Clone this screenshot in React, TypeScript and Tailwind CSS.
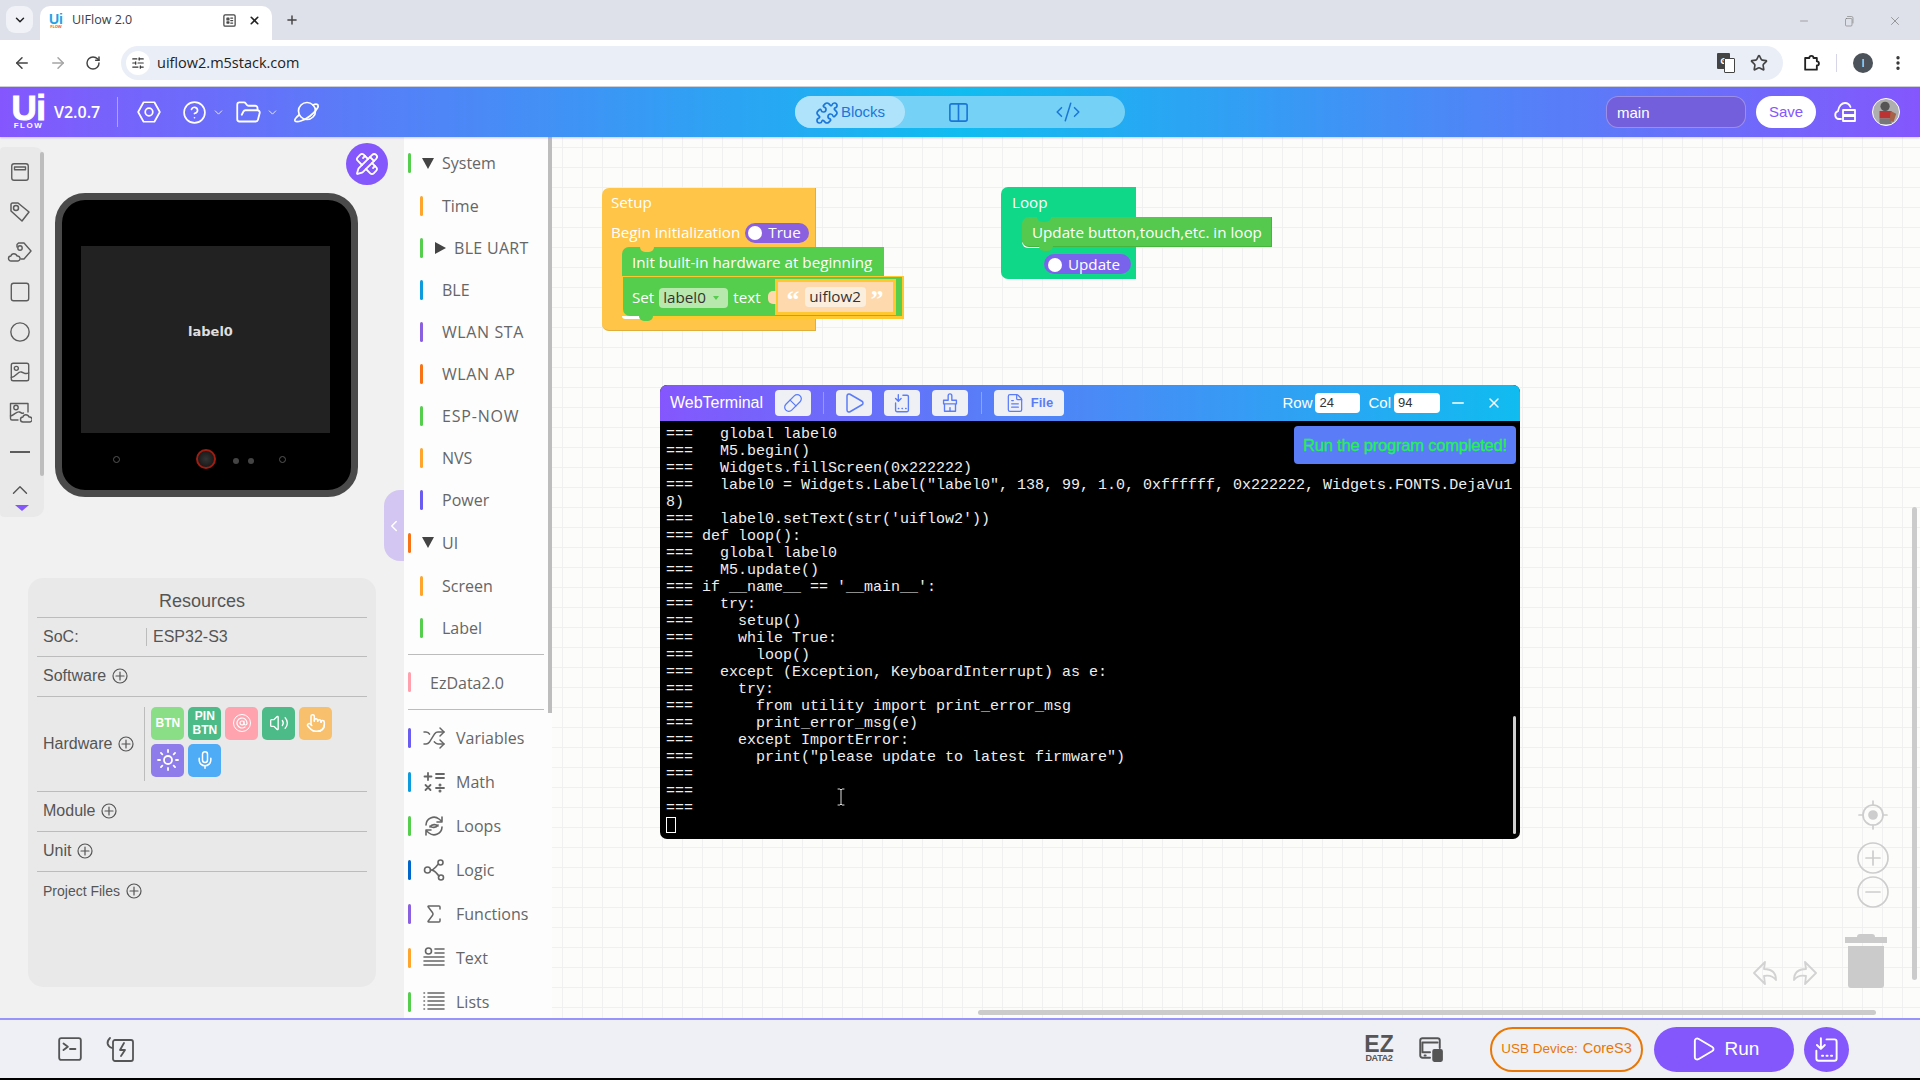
import React from "react";
import { ArrowLeft, ArrowRight, RotateCw, Star, X, Plus, ChevronDown, ChevronUp, ChevronLeft, CircleHelp, FolderOpen, PencilRuler, Shuffle, Sigma, Mic, Volume2, Sun, Pointer, AtSign, Play, FileText, Minus, Puzzle, CodeXml, Columns2, SlidersHorizontal, Pill, EllipsisVertical } from "lucide-react";

const S = ({ className = "", children, box = "0 0 24 24", w = 1.8 }: { className?: string; children: React.ReactNode; box?: string; w?: number }) => (
  <svg viewBox={box} className={className} fill="none" stroke="currentColor" strokeWidth={w} strokeLinecap="round" strokeLinejoin="round">{children}</svg>
);

const PlusC = () => (
  <S className="w-[16px] h-[16px] text-[#555] ml-[6px]" box="0 0 16 16" w={1.2}><circle cx="8" cy="8" r="7" /><path d="M8 4v8M4 8h8" /></S>
);

type Cat = { t: string; bar: string; barMl: string; tri?: "d" | "r"; triMl?: string; txMl: string; h: string; tr?: string };
const cats: Cat[] = [
  { t: "System", bar: "bg-[#55cd4d]", barMl: "ml-0", tri: "d", triMl: "ml-[11px]", txMl: "ml-[8px]", h: "h-[42px]" },
  { t: "Time", bar: "bg-[#ffa42d]", barMl: "ml-[12px]", txMl: "ml-[19px]", h: "h-[43px]" },
  { t: "BLE UART", bar: "bg-[#55cd4d]", barMl: "ml-[12px]", tri: "r", triMl: "ml-[12px]", txMl: "ml-[8px]", h: "h-[42px]", tr: "tracking-[0.3px]" },
  { t: "BLE", bar: "bg-[#0d9bdd]", barMl: "ml-[12px]", txMl: "ml-[19px]", h: "h-[42px]" },
  { t: "WLAN STA", bar: "bg-[#8a60e0]", barMl: "ml-[12px]", txMl: "ml-[19px]", h: "h-[42px]", tr: "tracking-[0.6px]" },
  { t: "WLAN AP", bar: "bg-[#f87316]", barMl: "ml-[12px]", txMl: "ml-[19px]", h: "h-[42px]", tr: "tracking-[0.6px]" },
  { t: "ESP-NOW", bar: "bg-[#55cd4d]", barMl: "ml-[12px]", txMl: "ml-[19px]", h: "h-[42px]", tr: "tracking-[0.8px]" },
  { t: "NVS", bar: "bg-[#ffa42d]", barMl: "ml-[12px]", txMl: "ml-[19px]", h: "h-[42px]" },
  { t: "Power", bar: "bg-[#6a5cf0]", barMl: "ml-[12px]", txMl: "ml-[19px]", h: "h-[42px]" },
  { t: "UI", bar: "bg-[#f87316]", barMl: "ml-0", tri: "d", triMl: "ml-[11px]", txMl: "ml-[8px]", h: "h-[43px]" },
  { t: "Screen", bar: "bg-[#ffa42d]", barMl: "ml-[12px]", txMl: "ml-[19px]", h: "h-[43px]" },
  { t: "Label", bar: "bg-[#55cd4d]", barMl: "ml-[12px]", txMl: "ml-[19px]", h: "h-[42px]" },
];

const I = "w-[24px] h-[24px] text-[#666]";
const tools: { t: string; bar: string; icon: React.ReactNode }[] = [
  { t: "Variables", bar: "bg-[#6a5cf0]", icon: <Shuffle className={I} strokeWidth={1.5} /> },
  {
    t: "Math", bar: "bg-[#0d9bdd]", icon: (
      <S className={I} w={1.8}><path d="M6 3v7M2.500 6.500h7M14 4h8M14 8h8M3.500 15l5 5M8.500 15l-5 5M14 18h8" /><circle cx="18" cy="15" r=".6" /><circle cx="18" cy="21" r=".6" /></S>
    ),
  },
  {
    t: "Loops", bar: "bg-[#55cd4d]", icon: (
      <S className={I} w={1.6}><path d="M4 11a8 8 0 0 1 13-6l3 2.500M20 3v5h-5" /><path d="M20 13a8 8 0 0 1-13 6l-3-2.500M4 21v-5h5" /><path d="M8 13c2-3 6-3 8-1M16 11c-2 3-6 3-8 1" /></S>
    ),
  },
  {
    t: "Logic", bar: "bg-[#0066cc]", icon: (
      <S className={I} w={1.6}><circle cx="5.500" cy="12" r="3" /><circle cx="18.500" cy="4.500" r="2.500" /><circle cx="19" cy="19.500" r="2.500" /><path d="M8.500 12c4 0 4-2 8-6M8.500 12c4 0 5 2 8.500 6" /></S>
    ),
  },
  { t: "Functions", bar: "bg-[#8a60e0]", icon: <Sigma className={I} strokeWidth={1.5} /> },
  {
    t: "Text", bar: "bg-[#ffa42d]", icon: (
      <S className={I} w={1.6}><circle cx="6.500" cy="5" r="3" /><path d="M13 3h9M13 7h9M2 11h20M2 15h20M2 19h20" /></S>
    ),
  },
  {
    t: "Lists", bar: "bg-[#55cd4d]", icon: (
      <S className={I} w={1.6}><path d="M6 3h16M6 7h16M6 11h16M6 15h16M6 19h16M2 3h.5M2 7h.5M2 11h.5M2 15h.5M2 19h.5" /></S>
    ),
  },
];

const term = [
  "===   global label0",
  "===   M5.begin()",
  "===   Widgets.fillScreen(0x222222)",
  '===   label0 = Widgets.Label("label0", 138, 99, 1.0, 0xffffff, 0x222222, Widgets.FONTS.DejaVu1',
  "8)",
  "===   label0.setText(str('uiflow2'))",
  "=== def loop():",
  "===   global label0",
  "===   M5.update()",
  "=== if __name__ == '__main__':",
  "===   try:",
  "===     setup()",
  "===     while True:",
  "===       loop()",
  "===   except (Exception, KeyboardInterrupt) as e:",
  "===     try:",
  "===       from utility import print_error_msg",
  "===       print_error_msg(e)",
  "===     except ImportError:",
  '===       print("please update to latest firmware")',
  "===",
  "===",
  "===",
];

const Tile = ({ bg, children }: { bg: string; children: React.ReactNode }) => (
  <div className={`w-[33px] h-[33px] rounded-[5px] flex items-center justify-center text-white font-bold text-[12px] leading-[14px] text-center ${bg}`}>{children}</div>
);

const Row = ({ children, h, cls = "" }: { children: React.ReactNode; h: string; cls?: string }) => (
  <div className={`flex items-center border-b border-[#bcbcbc] pl-[6px] ${h} ${cls}`}>{children}</div>
);

const TermBtn = ({ children, w = "w-[36px]" }: { children: React.ReactNode; w?: string }) => (
  <div className={`h-[26px] ${w} rounded-[4px] bg-[#eef0f6] flex items-center justify-center text-[#5b7cf7]`}>{children}</div>
);

const Knob = () => <span className="w-[14px] h-[14px] rounded-full bg-white shrink-0" />;

const Notch = ({ cls }: { cls: string }) => <span className={`absolute w-[14px] h-[5px] rounded-b-[5px] ${cls}`} />;

const StripIcon = ({ children }: { children: React.ReactNode }) => (
  <div className="h-[40px] flex items-center justify-center w-[40px] text-[#5c5c5c]">{children}</div>
);

export default function App() {
  return (
    <div className="w-[1920px] h-[1080px] overflow-hidden flex flex-col bg-black font-['Open_Sans','Noto_Sans',sans-serif]">
      {/* Browser tab strip */}
      <div className="h-[40px] shrink-0 bg-[#dee1e9] flex items-end relative">
        <div className="absolute left-[6px] top-[6px] w-[27px] h-[27px] rounded-[9px] bg-[#f0f2f8] flex items-center justify-center">
          <ChevronDown className="w-[14px] h-[14px] text-[#222]" strokeWidth={2.5} />
        </div>
        <div className="ml-[40px] w-[232px] h-[34px] bg-white rounded-t-[10px] flex items-center pl-[8px] pb-[5px]">
          <div className="w-[16px] h-[16px] flex flex-col items-center leading-none">
            <span className="text-[#1ca3e6] font-black text-[14px] leading-[12px] font-['Liberation_Sans']">Ui</span>
            <span className="text-[#e53] text-[4px] leading-[4px] font-bold">FLOW</span>
          </div>
          <span className="ml-[8px] text-[12.5px] text-[#3c4043]">UIFlow 2.0</span>
          <S className="ml-auto w-[15px] h-[15px] text-[#444]" w={2}><rect x="3" y="3" width="18" height="18" rx="2" /><path d="M8 8h3v3H8zM8 14h3v2H8zM14 8h3M14 12h3M14 16h3" /></S>
          <X className="ml-[11px] mr-[11px] w-[13px] h-[13px] text-[#222]" strokeWidth={3} />
        </div>
        <Plus className="absolute left-[285px] top-[13px] w-[14px] h-[14px] text-[#444]" strokeWidth={2.5} />
        <div className="absolute top-[14px] right-[18px] flex items-center gap-[33px] text-[#777]">
          <Minus className="w-[12px] h-[12px]" strokeWidth={1.2} />
          <S className="w-[12px] h-[12px]" w={1.2}><rect x="5" y="7" width="13" height="15" rx="2" /><path d="M9 3h8a3 3 0 0 1 3 3v10" /></S>
          <X className="w-[14px] h-[14px]" strokeWidth={1.2} />
        </div>
      </div>
      {/* Browser toolbar */}
      <div className="h-[47px] shrink-0 bg-white border-b border-[#cfd1d6] flex items-center relative">
        <ArrowLeft className="ml-[13px] w-[18px] h-[18px] text-[#444]" strokeWidth={2} />
        <ArrowRight className="ml-[18px] w-[18px] h-[18px] text-[#a5a5a5]" strokeWidth={2} />
        <RotateCw className="ml-[18px] w-[16px] h-[16px] text-[#444]" strokeWidth={2.2} />
        <div className="ml-[20px] w-[1662px] h-[34px] rounded-[17px] bg-[#eaeef7] flex items-center pl-[5px] mb-[1px]">
          <div className="w-[24px] h-[24px] rounded-full bg-white flex items-center justify-center">
            <SlidersHorizontal className="w-[14px] h-[14px] text-[#333]" strokeWidth={2} />
          </div>
          <span className="ml-[7px] text-[14.500px] text-[#222]">uiflow2.m5stack.com</span>
          <div className="ml-auto mr-[15px] flex items-center gap-[15px] text-[#444]">
            <div className="relative w-[18px] h-[20px]">
              <div className="absolute left-0 top-0 w-[13px] h-[16px] bg-[#444] rounded-[1px] flex items-center justify-center text-white text-[9px] font-bold">G</div>
              <div className="absolute left-[7px] top-[5px] w-[11px] h-[15px] bg-white border border-[#444] rounded-[1px]" />
            </div>
            <Star className="w-[18px] h-[18px]" strokeWidth={2.2} />
          </div>
        </div>
        <S className="ml-[18px] w-[20px] h-[20px] text-[#222]" w={2.2}><path d="M5 6h5a2.500 2.500 0 0 1 5 0h4v4a2.500 2.500 0 0 1 0 5v5H5z" /></S>
        <span className="ml-[15px] w-[1px] h-[18px] bg-[#d5d7e8]" />
        <span className="ml-[16px] w-[20px] h-[20px] rounded-full bg-[#4b5259] flex items-center justify-center text-white text-[11px]">I</span>
        <EllipsisVertical className="ml-[16px] w-[18px] h-[18px] text-[#333]" strokeWidth={2.5} />
      </div>
      {/* App header */}
      <div className="h-[50px] shrink-0 relative z-10 grid grid-cols-[1fr_auto_1fr] items-center bg-[linear-gradient(90deg,#8457fd_0%,#10bcf0_50%,#8457fd_100%)] shadow-[0_1px_2px_rgba(132,87,253,0.35)]">
        <div className="flex items-center text-white">
          <div className="ml-[12px] w-[33px] flex flex-col items-center font-['Liberation_Sans'] font-bold">
            <span className="text-[35px] leading-[26px] tracking-[-0.5px] [-webkit-text-stroke:1px_white]">Ui</span>
            <span className="text-[8px] leading-[7px] tracking-[1.5px] mt-[1px]">FLOW</span>
          </div>
          <span className="ml-[9px] text-[16px] font-semibold w-[48px]">V2.0.7</span>
          <span className="ml-[15px] w-[1px] h-[30px] bg-white/40" />
          <S className="ml-[18px] w-[26px] h-[26px]" w={1.6}><path d="M7 3h10l5 9-5 9H7l-5-9z" /><circle cx="12" cy="12" r="3.500" /></S>
          <CircleHelp className="ml-[20px] w-[25px] h-[25px]" strokeWidth={1.6} />
          <ChevronDown className="ml-[5px] w-[13px] h-[13px]" strokeWidth={1.5} />
          <FolderOpen className="ml-[10px] w-[27px] h-[27px]" strokeWidth={1.6} />
          <ChevronDown className="ml-[4px] w-[13px] h-[13px]" strokeWidth={1.5} />
          <S className="ml-[13px] w-[30px] h-[26px]" box="0 0 30 26" w={1.7}><circle cx="15" cy="12" r="8.500" /><path d="M7 16c-3 2.500-5 4.500-4 6 2 2 10-1 15-5s9-9 8-11c-1-1-3-1-5 0" /></S>
        </div>
        <div className="w-[330px] h-[32px] rounded-[16px] bg-[#75d1f5] flex items-center font-['Liberation_Sans'] text-[#1b76d9]">
          <div className="w-[110px] h-[32px] rounded-[16px] bg-[#aee3fb] flex items-center justify-center gap-[2px] text-[15px] pt-[1px]">
            <Puzzle className="w-[24px] h-[24px]" strokeWidth={1.7} />
            <span>Blocks</span>
          </div>
          <Columns2 className="ml-[42px] w-[23px] h-[23px]" strokeWidth={1.7} />
          <CodeXml className="ml-[85px] w-[26px] h-[26px]" strokeWidth={1.4} />
        </div>
        <div className="flex items-center justify-end pr-[20px]">
          <div className="w-[140px] h-[32px] rounded-[12px] border border-white/30 bg-[#735fdc] text-white text-[15px] flex items-center pl-[10px] pt-[2px] font-['Liberation_Sans']">main</div>
          <div className="ml-[10px] w-[60px] h-[32px] rounded-[16px] bg-white text-[#8457fd] text-[15px] flex items-center justify-center pt-[1px] font-['Liberation_Sans']">Save</div>
          <S className="ml-[17px] w-[24px] h-[24px] text-white" w={1.8}><path d="M8 19H6a4 4 0 0 1-1-7.800C5.500 6 9 3 12 3c2.500 0 4.500 1.500 5.500 4" /><rect x="10" y="10" width="12" height="5" /><rect x="10" y="16" width="12" height="5" /></S>
          <div className="ml-[15px] w-[28px] h-[28px] rounded-full bg-[#aeaeae] border border-white flex items-end justify-center overflow-hidden">
            <svg viewBox="0 0 28 28" className="w-[28px] h-[28px]"><circle cx="13" cy="9" r="5" fill="#555" /><rect x="7" y="14" width="13" height="8" fill="#b33" /><rect x="7" y="22" width="13" height="6" fill="#777" /><path d="M19 14l6 3-3 9-4-2z" fill="#a5634a" /></svg>
          </div>
        </div>
      </div>
      {/* Main area */}
      <div className="flex-1 flex min-h-0 relative">
        {/* Left panel */}
        <div className="w-[404px] shrink-0 bg-[#f1f1f1] relative flex flex-col">
          <div className="h-[441px] flex items-start">
            <div className="mt-[10px] w-[44px] h-[370px] bg-[#e9e9e9] rounded-r-[10px] rounded-l-[4px] relative pt-[5px]">
              <span className="absolute right-0 top-[5px] w-[4px] h-[324px] bg-[#bdbdbd] rounded-[2px]" />
              <StripIcon><S className="w-[22px] h-[22px]" w={1.5}><rect x="3" y="3" width="18" height="18" rx="2.500" /><rect x="6" y="6.500" width="12" height="3" /></S></StripIcon>
              <StripIcon><S className="w-[24px] h-[24px]" w={1.5}><path d="M3 8V4.500A1.500 1.500 0 0 1 4.500 3H10l11 9-7 9-11-10z" /><circle cx="8" cy="8" r="2.500" /></S></StripIcon>
              <StripIcon><S className="w-[26px] h-[24px]" w={1.4}><path d="M9 7V4.500L10.500 3H16l7 8-7 8h-3" /><circle cx="12" cy="8" r="2.200" /><path d="M3 21a2.500 2.500 0 0 1 0-5c.5-3 5-3 6 0a2.500 2.500 0 0 1 1 5z" /></S></StripIcon>
              <StripIcon><S className="w-[22px] h-[22px]" w={1.5}><rect x="2.500" y="2.500" width="19" height="19" rx="2.500" /></S></StripIcon>
              <StripIcon><S className="w-[22px] h-[22px]" w={1.5}><circle cx="12" cy="12" r="10" /></S></StripIcon>
              <StripIcon><S className="w-[22px] h-[22px]" w={1.5}><rect x="2.500" y="2.500" width="19" height="19" rx="2" /><circle cx="8" cy="8" r="2.200" /><path d="M2.500 18c6-1 7-7 11-6s4 3 8 1" /></S></StripIcon>
              <StripIcon><S className="w-[24px] h-[24px]" w={1.4}><path d="M10 20H4a1.500 1.500 0 0 1-1.500-1.500V3.500H20V12" /><circle cx="8" cy="7.500" r="2.200" /><path d="M2.500 16c4-1 6-5 9-4s2 2 4 1" /><path d="M15 22a2.500 2.500 0 0 1 0-5c.5-3 5-3 6 0a2.500 2.500 0 0 1 1 5z" /></S></StripIcon>
              <StripIcon><span className="w-[20px] h-[1.500px] bg-[#5c5c5c]" /></StripIcon>
              <div className="mt-[7px] w-[40px] h-[22px] flex items-center justify-center text-[#555]"><ChevronUp className="w-[26px] h-[26px]" strokeWidth={1.3} /></div>
              <div className="mt-[4px] ml-[15px] w-0 h-0 border-l-[7.500px] border-r-[7.500px] border-t-[6px] border-l-transparent border-r-transparent border-t-[#8457fd]" />
            </div>
            {/* Device */}
            <div className="ml-[11px] mt-[56px] w-[303px] h-[304px] rounded-[30px] border-[7px] border-[#4a4a4a] bg-black pt-[46px] pl-[19px] shrink-0">
              <div className="w-[249px] h-[187px] bg-[#222222] flex items-center justify-center pl-[10px] pb-[15px] text-[13px] font-semibold text-[#dedede] font-['DejaVu_Sans']">label0</div>
              <div className="mt-[16px] h-[20px] flex items-center ml-[32px]">
                <span className="w-[7px] h-[7px] rounded-full border border-[#555]" />
                <span className="ml-[76px] w-[20px] h-[20px] rounded-full border-2 border-[#a01d12] bg-[radial-gradient(circle,#333,#111)]" />
                <span className="ml-[17px] mt-[3px] w-[6px] h-[6px] rounded-full bg-[#444]" />
                <span className="ml-[9px] mt-[3px] w-[6px] h-[6px] rounded-full bg-[#444]" />
                <span className="ml-[25px] w-[7px] h-[7px] rounded-full border border-[#555]" />
              </div>
            </div>
          </div>
          {/* Resources */}
          <div className="ml-[28px] w-[348px] h-[409px] rounded-[15px] bg-[#e9e9e9] px-[9px] text-[#555] font-['Liberation_Sans'] text-[16px]">
            <div className="h-[40px] border-b border-[#bcbcbc] flex items-center justify-center text-[18px] pt-[8px]">Resources</div>
            <Row h="h-[39px]">
              <span className="w-[103px]">SoC:</span>
              <span className="w-[1px] h-[18px] bg-[#bcbcbc]" />
              <span className="ml-[6px]">ESP32-S3</span>
            </Row>
            <Row h="h-[40px]" cls="pb-[2px]"><span>Software</span><PlusC /></Row>
            <Row h="h-[95px]">
              <span>Hardware</span><PlusC />
              <span className="ml-[10px] w-[1px] h-[74px] bg-[#bcbcbc]" />
              <div className="ml-[6px] w-[185px] flex flex-wrap gap-x-[4px] gap-y-[4px] mb-[5px]">
                <Tile bg="bg-[#8ade85]">BTN</Tile>
                <Tile bg="bg-[#4cbb87]">PIN<br />BTN</Tile>
                <Tile bg="bg-[#ffa3ae]"><span className="w-[18px] h-[18px] rounded-full border-[1.500px] border-white flex items-center justify-center"><AtSign className="w-[12px] h-[12px]" strokeWidth={2.4} /></span></Tile>
                <Tile bg="bg-[#4cbb87]"><Volume2 className="w-[20px] h-[20px]" strokeWidth={1.6} /></Tile>
                <Tile bg="bg-[#f8c06c]"><Pointer className="w-[20px] h-[20px]" strokeWidth={1.8} /></Tile>
                <Tile bg="bg-[#8e7cea]"><Sun className="w-[24px] h-[24px]" strokeWidth={1.8} /></Tile>
                <Tile bg="bg-[#4eabf6]"><Mic className="w-[20px] h-[20px]" strokeWidth={1.8} /></Tile>
              </div>
            </Row>
            <Row h="h-[40px]" cls="pb-[2px]"><span>Module</span><PlusC /></Row>
            <Row h="h-[40px]" cls="pb-[2px]"><span>Unit</span><PlusC /></Row>
            <div className="h-[40px] flex items-center pl-[6px] pb-[2px] text-[14px]"><span>Project Files</span><PlusC /></div>
          </div>
          {/* overlay: edit button + collapse tab */}
          <div className="absolute left-[346px] top-[6px] w-[42px] h-[42px] rounded-full bg-[#8457fd] flex items-center justify-center text-white">
            <PencilRuler className="w-[24px] h-[24px]" strokeWidth={1.8} />
          </div>
          <div className="absolute right-0 top-[353px] w-[20px] h-[71px] rounded-l-[16px] bg-[#d4c6f2] flex items-center justify-center text-white">
            <ChevronLeft className="w-[18px] h-[18px]" strokeWidth={2} />
          </div>
        </div>
        {/* Categories */}
        <div className="w-[148px] shrink-0 bg-[#fdfdfd] relative pl-[4px] pt-[5px] overflow-hidden text-[#666] text-[16px]">
          <span className="absolute right-0 top-0 w-[4px] h-[576px] bg-[#bdbdbd]" />
          {cats.map((c) => (
            <div key={c.t} className={`flex items-center ${c.h}`}>
              <span className={`w-[3px] h-[20px] rounded-[2px] shrink-0 ${c.bar} ${c.barMl}`} />
              {c.tri === "d" && <span className={`w-0 h-0 border-l-[6px] border-r-[6px] border-t-[11px] border-l-transparent border-r-transparent border-t-[#444] ${c.triMl}`} />}
              {c.tri === "r" && <span className={`w-0 h-0 border-t-[6px] border-b-[6px] border-l-[11px] border-t-transparent border-b-transparent border-l-[#444] ${c.triMl}`} />}
              <span className={`${c.txMl} whitespace-nowrap ${c.tr ?? ""}`}>{c.t}</span>
            </div>
          ))}
          <div className="mt-[5px] mr-[8px] h-[1px] bg-[#bcbcbc]" />
          <div className="flex items-center h-[54px]">
            <span className="w-[3px] h-[20px] rounded-[2px] bg-[#ffa0ac]" />
            <span className="ml-[19px] pt-[2px]">EzData2.0</span>
          </div>
          <div className="mr-[8px] h-[1px] bg-[#bcbcbc]" />
          <div className="pt-[6px]">
            {tools.map((c) => (
              <div key={c.t} className="flex items-center h-[44px]">
                <span className={`w-[3px] h-[20px] rounded-[2px] shrink-0 ${c.bar}`} />
                <span className="ml-[11px] w-[24px] h-[24px] shrink-0">{c.icon}</span>
                <span className="ml-[10px]">{c.t}</span>
              </div>
            ))}
          </div>
        </div>
        {/* Canvas */}
        <div className="flex-1 relative overflow-hidden bg-[#fcfcfb] bg-[linear-gradient(#f0f0f0_1px,transparent_1px),linear-gradient(90deg,#f0f0f0_1px,transparent_1px)] bg-[size:20px_20px] bg-[position:10px_10px] font-['Open_Sans','Noto_Sans',sans-serif] text-[15.200px] text-white">
          {/* Setup block */}
          <div className="absolute left-[50px] top-[51px] w-[214px] h-[143px] bg-[#fec548] border-r border-b border-[#e0ae3d] rounded-l-[7px]">
            <div className="h-[29px] flex items-center pl-[9px]">Setup</div>
            <div className="h-[30px] flex items-center pl-[9px] pt-[1px] whitespace-nowrap">Begin initialization
              <div className="ml-[5px] w-[64px] h-[20px] rounded-[10px] bg-[#8a60e0] flex items-center pl-[3px]"><Knob /><span className="ml-[6px]">True</span></div>
            </div>
            <div className="absolute left-[20px] top-[59px] w-[262px] h-[29px] bg-[#55cd4d] rounded-tl-[7px] flex items-center pl-[10px] pt-[1px] whitespace-nowrap">
              Init built-in hardware at beginning
              <Notch cls="left-[18px] top-0 bg-[#fec548]" />
            </div>
            <div className="absolute left-[20px] top-[88px] w-[282px] h-[43px] bg-[#ffc82f]" />
            <div className="absolute left-[20px] top-[128px] w-[24px] h-[3px] bg-white rounded-bl-[6px]" />
            <div className="absolute left-[21px] top-[89px] w-[279px] h-[39px] bg-[#55cd4d] rounded-bl-[7px] flex items-center pl-[9px] pt-[2px] whitespace-nowrap">
              Set
              <div className="ml-[5px] w-[69px] h-[20px] rounded-[4px] bg-[#b8e8ae] flex items-center pl-[4px] text-[#333]">label0<span className="ml-[7px] w-0 h-0 border-l-[3px] border-r-[3px] border-t-[4px] border-l-transparent border-r-transparent border-t-[#55cd4d]" /></div>
              <span className="ml-[5px]">text</span>
              <div className="ml-[14px] w-[121px] h-[36px] -mt-[2px] bg-[#fed9ae] border-[3px] border-[#ffc82f] flex items-center pl-[9px] relative">
                <span className="absolute left-[-10px] top-[9px] w-[8px] h-[13px] bg-[#fed9ae] rounded-l-[5px]" />
                <span className="text-[26px] leading-[12px] pt-[7px] font-bold text-white font-['Liberation_Serif']">“</span>
                <span className="ml-[5px] w-[61px] h-[20px] bg-[#fbeedd] rounded-[4px] text-[#333] flex items-center justify-center">uiflow2</span>
                <span className="ml-[5px] text-[26px] leading-[12px] pt-[7px] font-bold text-white font-['Liberation_Serif']">”</span>
              </div>
              <Notch cls="left-[16px] bottom-[-5px] bg-[#55cd4d]" />
            </div>
          </div>
          {/* Loop block */}
          <div className="absolute left-[449px] top-[50px] w-[135px] h-[92px] bg-[#10d889] rounded-[7px] rounded-r-none pl-[11px] pt-[2px]">
            <div className="h-[27px] flex items-center">Loop</div>
            <div className="absolute left-[21px] top-[55px] w-[22px] h-[6px] bg-white rounded-bl-[7px]" />
            <div className="absolute left-[21px] top-[30px] w-[250px] h-[30px] bg-[#55c94d] border-b border-r border-[#45b53e] rounded-l-[7px] flex items-center pl-[10px] pt-[1px] whitespace-nowrap">
              Update button,touch,etc. in loop
              <Notch cls="left-[15px] top-0 bg-[#10d889]" />
              <Notch cls="left-[17px] bottom-[-5px] bg-[#55c94d]" />
            </div>
            <div className="absolute left-[43px] top-[67px] w-[87px] h-[20px] rounded-[10px] bg-[#7a63ec] flex items-center pl-[4px] pt-[1px]"><Knob /><span className="ml-[6px]">Update</span></div>
          </div>
          {/* WebTerminal */}
          <div className="absolute left-[108px] top-[248px] w-[860px] h-[454px] rounded-[7px] overflow-hidden bg-black flex flex-col">
            <div className="h-[36px] shrink-0 bg-[linear-gradient(90deg,#8457fd,#10bcf0)] flex items-center pl-[10px] font-['Liberation_Sans'] text-[16px] text-white">
              <span className="w-[93px] whitespace-nowrap">WebTerminal</span>
              <div className="ml-[12px]"><TermBtn><Pill className="w-[20px] h-[20px]" strokeWidth={1.5} /></TermBtn></div>
              <span className="ml-[12px] w-[1px] h-[22px] bg-white/30" />
              <div className="ml-[12px]"><TermBtn><Play className="w-[24px] h-[24px]" strokeWidth={1.5} /></TermBtn></div>
              <div className="ml-[12px]"><TermBtn><S className="w-[22px] h-[22px]" w={1.5}><path d="M5 12v8a1.500 1.500 0 0 0 1.500 1.500h11a1.500 1.500 0 0 0 1.500-1.500V5a1.500 1.500 0 0 0-1.500-1.500H13" /><path d="M8 3v7M5 7l3 3 3-3M8 18h.5M12 18h.5M16 18h.5" /></S></TermBtn></div>
              <div className="ml-[12px]"><TermBtn><S className="w-[22px] h-[22px]" w={1.5}><path d="M10 9V4a2 2 0 0 1 4 0v5h5v4H5V9zM6 13v8h12v-8M12 21v-4" /></S></TermBtn></div>
              <span className="ml-[13px] w-[1px] h-[22px] bg-white/30" />
              <div className="ml-[12px]"><TermBtn w="w-[70px]"><FileText className="w-[20px] h-[20px]" strokeWidth={1.5} /><span className="ml-[6px] text-[13px] font-bold">File</span></TermBtn></div>
              <div className="ml-auto flex items-center text-[15px]">
                <span>Row</span>
                <span className="ml-[3px] w-[45px] h-[20px] rounded-[4px] bg-white text-[#333] text-[13px] flex items-center pl-[4px]">24</span>
                <span className="ml-[8px]">Col</span>
                <span className="ml-[3px] w-[46px] h-[20px] rounded-[4px] bg-white text-[#333] text-[13px] flex items-center pl-[4px]">94</span>
                <Minus className="ml-[9px] w-[18px] h-[18px]" strokeWidth={2} />
                <X className="ml-[19px] mr-[18px] w-[16px] h-[16px]" strokeWidth={2} />
              </div>
            </div>
            <div className="flex-1 pl-[6px] pt-[5px] font-['Liberation_Mono'] text-[15px] leading-[17px] text-[#eeeeee] whitespace-pre relative">
              {term.map((l, i) => <div key={i} className="h-[17.030px]">{l}</div>)}
              <div className="w-[10px] h-[16px] border border-white" />
              <div className="absolute right-[4px] top-[5px] w-[222px] h-[38px] rounded-[4px] bg-[#5a7cf7] text-[#25f05a] [-webkit-text-stroke:0.3px_#25f05a] font-['Liberation_Sans'] text-[16.500px] leading-[38px] text-center tracking-[-0.2px]">Run the program completed!</div>
              <span className="absolute right-[4px] top-[295px] w-[3px] h-[118px] rounded-[2px] bg-[#cfcfcf]" />
              <S className="absolute left-[175px] top-[367px] w-[12px] h-[18px] text-[#ddd]" box="0 0 12 18" w={1}><path d="M3 1h2l1 1 1-1h2M6 2v14M3 17h2l1-1 1 1h2" /></S>
            </div>
          </div>
          {/* Canvas controls */}
          <S className="absolute left-[1306px] top-[663px] w-[30px] h-[30px] text-[#cdcdcd]" box="0 0 30 30" w={1.7}><circle cx="15" cy="15" r="10" /><circle cx="15" cy="15" r="4" fill="currentColor" /><path d="M15 1v4M15 25v4M1 15h4M25 15h4" /></S>
          <S className="absolute left-[1305px] top-[705px] w-[32px] h-[32px] text-[#cdcdcd]" box="0 0 32 32" w={1.7}><circle cx="16" cy="16" r="15" /><path d="M16 9v14M9 16h14" /></S>
          <S className="absolute left-[1305px] top-[739px] w-[32px] h-[32px] text-[#cdcdcd]" box="0 0 32 32" w={1.7}><circle cx="16" cy="16" r="15" /><path d="M9 16h14" /></S>
          <S className="absolute left-[1200px] top-[824px] w-[26px] h-[24px] text-[#d2d2d2]" box="0 0 26 24" w={1.8}><path d="M13 1 2 12l11 11-1-8c5-1 9 0 12 4 0-7-4-11-12-11z" /></S>
          <S className="absolute left-[1240px] top-[824px] w-[26px] h-[24px] text-[#d2d2d2]" box="0 0 26 24" w={1.8}><path d="M13 1l11 11-11 11 1-8c-5-1-9 0-12 4 0-7 4-11 12-11z" /></S>
          <div className="absolute left-[1293px] top-[797px] w-[42px] flex flex-col items-center">
            <span className="w-[18px] h-[3px] rounded-t-[3px] bg-[#cbcbcb]" />
            <span className="w-[42px] h-[6px] bg-[#cbcbcb]" />
            <span className="mt-[3px] w-[36px] h-[42px] rounded-b-[3px] bg-[#cbcbcb]" />
          </div>
          <span className="absolute left-[1360px] top-[370px] w-[5px] h-[473px] rounded-[3px] bg-[#cbcbcb]" />
          <span className="absolute left-[426px] top-[873px] w-[898px] h-[5px] rounded-[3px] bg-[#cbcbcb]" />
        </div>
      </div>
      {/* Bottom bar */}
      <div className="h-[60px] shrink-0 mb-[2px] bg-[#eef0f6] border-t-2 border-[#9794fb] flex items-center text-[#555]">
        <S className="ml-[57px] w-[26px] h-[26px]" w={1.7}><rect x="2" y="2" width="20" height="20" rx="2" /><path d="M6 7l4 3-4 3M12 12h5" /></S>
        <S className="ml-[22px] w-[30px] h-[28px]" box="0 0 30 28" w={1.8}><rect x="8" y="5" width="20" height="21" rx="2" /><path d="M19 8l-4 7h5l-4 6M5 3C1 7 2 11 7 13" /></S>
        <div className="ml-auto flex flex-col items-center w-[28px] font-['Liberation_Sans'] font-bold">
          <span className="text-[23px] leading-[19px]">EZ</span>
          <span className="text-[9px] leading-[9px] tracking-[-0.3px]">DATA2</span>
        </div>
        <S className="ml-[24px] w-[26px] h-[26px]" w={1.8}><path d="M12 20H5a2 2 0 0 1-2-2V4a2 2 0 0 1 2-2h14a2 2 0 0 1 2 2v7" /><path d="M5 6h14M5 6v9h7M7 18h1" /><rect x="15" y="13" width="8" height="10" rx="1" fill="currentColor" /></S>
        <div className="ml-[47px] w-[153px] h-[45px] rounded-[23px] border-2 border-[#e87706] text-[#e87706] font-['Liberation_Sans'] flex items-center justify-center whitespace-pre">
          <span className="text-[13.500px]">USB Device:</span><span className="ml-[5px] text-[14.500px]">CoreS3</span>
        </div>
        <div className="ml-[11px] w-[140px] h-[45px] rounded-[23px] bg-[#8457fd] text-white flex items-center justify-center font-['Liberation_Sans'] text-[19px]">
          <Play className="w-[28px] h-[28px]" strokeWidth={1.6} /><span className="ml-[8px]">Run</span>
        </div>
        <div className="ml-[10px] mr-[71px] w-[45px] h-[45px] rounded-full bg-[#8457fd] text-white flex items-center justify-center">
          <S className="w-[27px] h-[27px]" w={1.7}><path d="M3 13v7a2 2 0 0 0 2 2h14a2 2 0 0 0 2-2V5a2 2 0 0 0-2-2h-7" /><path d="M7 2v9M3.500 8 7 11.500 10.500 8M8 17.500h1M12 17.500h1M16 17.500h1" /></S>
        </div>
      </div>
    </div>
  );
}
